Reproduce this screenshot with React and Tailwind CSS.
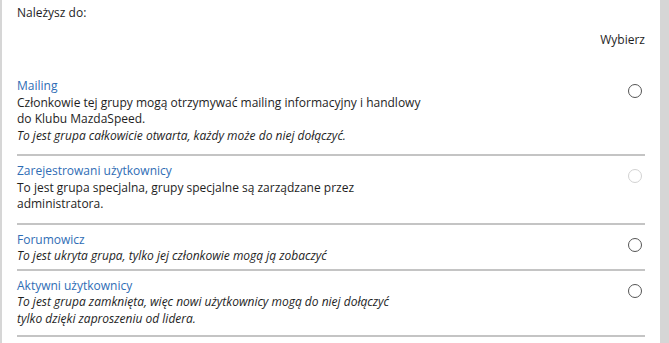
import React from "react";

const groups = [
  {
    name: "Mailing",
    desc: ["Członkowie tej grupy mogą otrzymywać mailing informacyjny i handlowy", "do Klubu MazdaSpeed."],
    note: ["To jest grupa całkowicie otwarta, każdy może do niej dołączyć."],
    pad: "pt-0 pb-[10px]",
  },
  {
    name: "Zarejestrowani użytkownicy",
    desc: ["To jest grupa specjalna, grupy specjalne są zarządzane przez", "administratora."],
    note: [],
    disabled: true,
    pad: "pt-[7px] pb-[10px]",
  },
  {
    name: "Forumowicz",
    desc: [],
    note: ["To jest ukryta grupa, tylko jej członkowie mogą ją zobaczyć"],
    pad: "pt-[7px] pb-[4px]",
  },
  {
    name: "Aktywni użytkownicy",
    desc: [],
    note: ["To jest grupa zamknięta, więc nowi użytkownicy mogą do niej dołączyć", "tylko dzięki zaproszeniu od lidera."],
    pad: "pt-[7px] pb-[8px]",
  },
];

const Radio = ({ disabled }) => (
  <span
    className={
      "mt-[6px] mr-[3px] block w-[14px] h-[14px] rounded-full border bg-white shrink-0 " +
      (disabled ? "border-[#d2d2d2]" : "border-[#555555]")
    }
  />
);

const App = () => {
  return (
    <div
      className="w-[669px] h-[343px] overflow-hidden flex bg-white text-[#1e1e1e] text-[12px] leading-[16.5px]"
      style={{ fontFamily: '"Open Sans", "Noto Sans", sans-serif' }}
    >
      <div className="flex-1 border-l-2 border-[#d6d6d6] px-[15px] pt-[5px]">
        <p>Należysz do:</p>
        <div className="flex justify-end mt-[10px] mb-[30px]">
          <span>Wybierz</span>
        </div>
        {groups.map((g, i) => (
          <div key={i} className={"flex items-start border-b-2 border-[#c4c4c4] " + g.pad}>
            <div className="flex-1">
              <p className="text-[#2f6db5]">{g.name}</p>
              {g.desc.map((d, j) => (
                <p key={j}>{d}</p>
              ))}
              {g.note.map((d, j) => (
                <p key={j} className="italic">{d}</p>
              ))}
            </div>
            <Radio disabled={g.disabled} />
          </div>
        ))}
      </div>
      <div className="w-[9px] bg-[#d6d6d6]" />
    </div>
  );
};

export default App;
